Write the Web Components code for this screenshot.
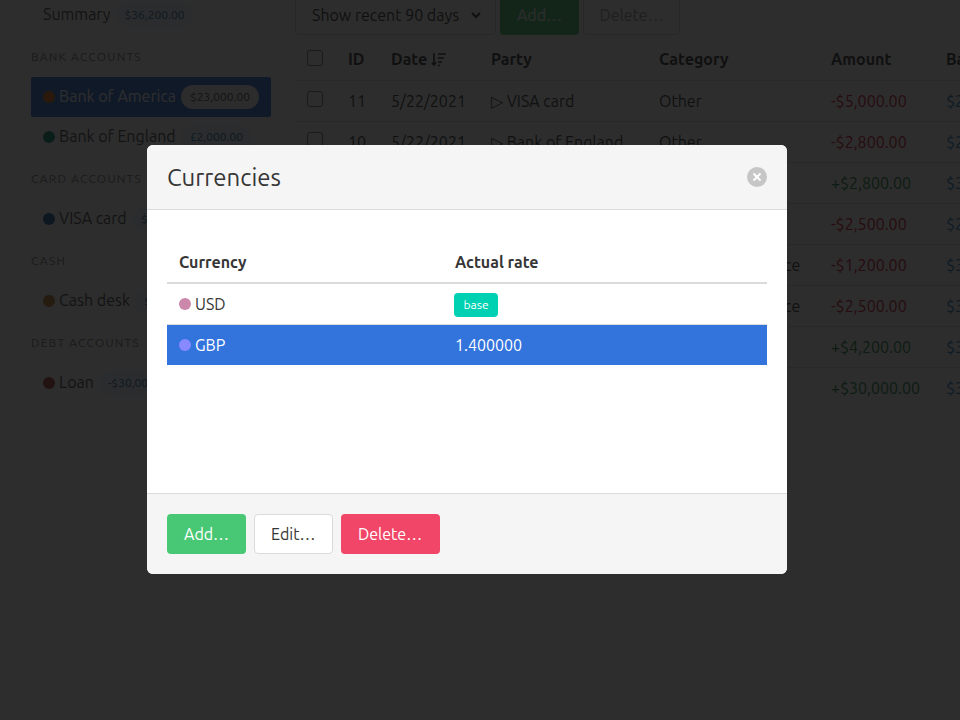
<!DOCTYPE html>
<html>
<head>
<meta charset="utf-8">
<title>Currencies</title>
<style>
    html { background: white; text-rendering: optimizeLegibility; }
    html, body { margin: 0; height: 720px; overflow: hidden; }
    body { position: relative; font-family: Ubuntu, "Noto Sans", "Open Sans", sans-serif; font-size: 16px; color: #4a4a4a; }
</style>
</head>
<body>

<app-page>
    <side-menu slot="side">
        <menu-item label="Summary" amount="$36,200.00"></menu-item>
        <menu-label>Bank accounts</menu-label>
        <menu-item label="Bank of America" amount="$23,000.00" dot="#e8720c" active></menu-item>
        <menu-item label="Bank of England" amount="£2,000.00" dot="#0f8f73"></menu-item>
        <menu-label>Card accounts</menu-label>
        <menu-item label="VISA card" amount="$5,000.00" dot="#1666b0"></menu-item>
        <menu-label>Cash</menu-label>
        <menu-item label="Cash desk" amount="$6,200.00" dot="#c9822e"></menu-item>
        <menu-label>Debt accounts</menu-label>
        <menu-item label="Loan" amount="-$30,000.00" dot="#b84040"></menu-item>
    </side-menu>
    <tx-panel></tx-panel>
</app-page>

<currency-modal>
    <app-button slot="foot" kind="success">Add…</app-button>
    <app-button slot="foot">Edit…</app-button>
    <app-button slot="foot" kind="danger">Delete…</app-button>
</currency-modal>

<script>
class AppPage extends HTMLElement {
    constructor() {
        super();
        const shadow = this.attachShadow({ mode: 'open' });
        shadow.innerHTML = `
            <style>
                :host {
                    display: flex;
                    gap: 24px;
                    width: 1200px;
                    margin-top: -5px;
                    padding-left: 31px;
                }
            </style>
            <slot name="side"></slot>
            <slot></slot>
        `
    }
}

class SideMenu extends HTMLElement {
    constructor() {
        super();
        const shadow = this.attachShadow({ mode: 'open' });
        shadow.innerHTML = `
            <style>
                :host {
                    display: flex;
                    flex-direction: column;
                    flex: none;
                    width: 240px;
                }
            </style>
            <slot></slot>
        `
    }
}

class MenuLabel extends HTMLElement {
    constructor() {
        super();
        const shadow = this.attachShadow({ mode: 'open' });
        shadow.innerHTML = `
            <style>
                :host {
                    display: block;
                    height: 15px;
                    margin: 14px 0 13px;
                    font-size: 12px;
                    line-height: 15px;
                    letter-spacing: 1.2px;
                    text-transform: uppercase;
                    color: #7a7a7a;
                }
            </style>
            <slot></slot>
        `
    }
}

class MenuItem extends HTMLElement {
    constructor() {
        super();
        const shadow = this.attachShadow({ mode: 'open' });
        const dot = this.getAttribute('dot');
        shadow.innerHTML = `
            <style>
                :host {
                    display: flex;
                    align-items: center;
                    height: 40px;
                    padding: 0 12px;
                    border-radius: 2px;
                    white-space: nowrap;
                    overflow: hidden;
                    color: #4a4a4a;
                }
                :host([active]) {
                    background: #3273dc;
                    color: white;
                }
                .dot {
                    flex: none;
                    width: 12px;
                    height: 12px;
                    margin-right: 4px;
                    border-radius: 50%;
                }
                .name { padding-bottom: 2px; }
                .tag {
                    flex: none;
                    margin-left: 5px;
                    padding: 0 9px;
                    height: 24px;
                    border-radius: 12px;
                    font-size: 12px;
                    line-height: 24px;
                    background: #eef6fc;
                    color: #1d72aa;
                }
                :host([active]) .tag {
                    background: #f5f5f5;
                    color: #4a4a4a;
                }
            </style>
            ${dot ? `<span class="dot" style="background:${dot}"></span>` : ''}
            <span class="name">${this.getAttribute('label')}</span>
            <span class="tag">${this.getAttribute('amount')}</span>
        `
    }
}

const TX_ROWS = [
    ['11', '▷ VISA card', 'Other', '-$5,000.00', '$23,000.00'],
    ['10', '▷ Bank of England', 'Other', '-$2,800.00', '$28,000.00'],
    ['9', '◁ Bank of England', 'Other', '+$2,800.00', '$30,800.00'],
    ['8', '▷ Cash desk', 'Other', '-$2,500.00', '$28,000.00'],
    ['7', 'Rent office', 'Office Maintenance', '-$1,200.00', '$30,500.00'],
    ['6', 'Rent storage', 'Office Maintenance', '-$2,500.00', '$31,700.00'],
    ['5', 'Customer', 'Sales', '+$4,200.00', '$34,200.00'],
    ['4', 'Loan', 'Other', '+$30,000.00', '$30,000.00']
];

class TxPanel extends HTMLElement {
    constructor() {
        super();
        const shadow = this.attachShadow({ mode: 'open' });
        const rows = TX_ROWS.map(r => `
            <tr>
                <td><span class="check"></span></td>
                <td>${r[0]}</td>
                <td>5/22/2021</td>
                <td>${r[1]}</td>
                <td>${r[2]}</td>
                <td class="${r[3][0] === '+' ? 'plus' : 'minus'}">${r[3]}</td>
                <td class="bal">${r[4]}</td>
            </tr>`).join('');
        shadow.innerHTML = `
            <style>
                :host {
                    display: block;
                    flex: none;
                }
                .bar {
                    display: flex;
                    gap: 4px;
                    margin-bottom: 4px;
                    height: 40px;
                }
                .bar > div {
                    box-sizing: border-box;
                    display: flex;
                    align-items: center;
                    justify-content: center;
                    height: 40px;
                    border: 1px solid #dbdbdb;
                    border-radius: 4px;
                    color: #363636;
                }
                .select { width: 201px; justify-content: space-between !important; padding: 0 13px 0 16px; }
                .add { width: 79px; background: #48c774; border-color: transparent !important; color: white !important; }
                .del { width: 97px; color: #9a9a9a !important; }
                table {
                    border-collapse: collapse;
                    table-layout: fixed;
                    width: 740px;
                    color: #363636;
                }
                th, td {
                    box-sizing: border-box;
                    height: 41px;
                    padding: 0 0 0 12px;
                    line-height: 24px;
                    text-align: left;
                    white-space: nowrap;
                    border-bottom: 1px solid #dbdbdb;
                    vertical-align: middle;
                }
                th { font-weight: 700; }
                tr:last-child td { border-bottom: 0; }
                .check {
                    display: block;
                    box-sizing: border-box;
                    width: 16px;
                    height: 16px;
                    margin-bottom: 3px;
                    border: 1px solid #767676;
                    border-radius: 3px;
                    background: white;
                }
                .minus { color: #cc0f35; }
                .plus { color: #23853f; }
                .bal { color: #2080c8; }
                svg { vertical-align: -2px; }
            </style>
            <div class="bar">
                <div class="select">Show recent 90 days
                    <svg width="12" height="8" viewBox="0 0 12 8"><path d="M2 2l4 4 4-4" fill="none" stroke="#363636" stroke-width="2"/></svg>
                </div>
                <div class="add">Add…</div>
                <div class="del">Delete…</div>
            </div>
            <table>
                <colgroup>
                    <col style="width:41px"><col style="width:43px"><col style="width:100px">
                    <col style="width:168px"><col style="width:172px"><col style="width:115px"><col style="width:101px">
                </colgroup>
                <tr>
                    <th><span class="check"></span></th>
                    <th>ID</th>
                    <th>Date <svg width="16" height="15" viewBox="0 0 16 15"><path d="M3 1v12M.8 10.500L3 13l2.200-2.500M7 2h8M7 6h6M7 10h4M7 13.500h2" fill="none" stroke="#363636" stroke-width="1.6"/></svg></th>
                    <th>Party</th>
                    <th>Category</th>
                    <th>Amount</th>
                    <th>Balance</th>
                </tr>
                ${rows}
            </table>
        `
    }
}

class AppButton extends HTMLElement {
    constructor() {
        super();
        const shadow = this.attachShadow({ mode: 'open' });
        shadow.innerHTML = `
            <style>
                :host {
                    display: block;
                    box-sizing: border-box;
                    height: 40px;
                    padding: 0 16px;
                    border: 1px solid #dbdbdb;
                    border-radius: 4px;
                    background: white;
                    color: #363636;
                    line-height: 38px;
                }
                :host([kind="success"]) { background: #48c774; border-color: transparent; color: white; }
                :host([kind="danger"]) { background: #f14668; border-color: transparent; color: white; min-width: 99px; text-align: center; }
            </style>
            <slot></slot>
        `
    }
}

class CurrencyModal extends HTMLElement {
    constructor() {
        super();
        const shadow = this.attachShadow({ mode: 'open' });
        shadow.innerHTML = `
            <style>
                :host {
                    position: absolute;
                    inset: 0;
                    display: flex;
                    align-items: flex-start;
                    justify-content: center;
                    padding: 145px 26px 0 0;
                    box-sizing: border-box;
                    background: rgba(10, 10, 10, .86);
                }
                .card {
                    width: 640px;
                    border-radius: 6px;
                    background: white;
                }
                header {
                    display: flex;
                    align-items: center;
                    justify-content: space-between;
                    height: 64px;
                    padding: 0 20px;
                    background: #f5f5f5;
                    border-bottom: 1px solid #dbdbdb;
                    border-radius: 6px 6px 0 0;
                    color: #363636;
                    font-size: 24px;
                }
                .close {
                    width: 20px;
                    height: 20px;
                    border-radius: 50%;
                    background: rgba(10, 10, 10, .2);
                }
                .close svg { display: block; }
                .body {
                    box-sizing: border-box;
                    height: 283px;
                    padding: 32px 20px 0;
                }
                table {
                    width: 600px;
                    table-layout: fixed;
                    border-collapse: collapse;
                    color: #363636;
                }
                th, td {
                    box-sizing: border-box;
                    padding: 0 12px;
                    text-align: left;
                }
                th {
                    height: 41px;
                    border-bottom: 2px solid #dbdbdb;
                    font-weight: 700;
                }
                td { height: 41px; border-bottom: 1px solid #dbdbdb; }
                tr.selected td { height: 41px; border-bottom: 0; background: #3273dc; color: white; }
                .cur { display: flex; align-items: center; gap: 4px; }
                .dot { width: 12px; height: 12px; border-radius: 50%; }
                .tag {
                    display: inline-block;
                    height: 24px;
                    margin-top: 2px;
                    margin-left: -1px;
                    padding: 0 9.5px;
                    border-radius: 4px;
                    background: #00d1b2;
                    color: white;
                    font-size: 12px;
                    line-height: 24px;
                    vertical-align: middle;
                }
                footer {
                    display: flex;
                    gap: 8px;
                    padding: 20px;
                    background: #f5f5f5;
                    border-top: 1px solid #dbdbdb;
                    border-radius: 0 0 6px 6px;
                }
            </style>
            <div class="card">
                <header>
                    <span>Currencies</span>
                    <span class="close">
                        <svg width="20" height="20" viewBox="0 0 20 20"><path d="M6.500 6.500l7 7M13.500 6.500l-7 7" stroke="white" stroke-width="2"/></svg>
                    </span>
                </header>
                <div class="body">
                    <table>
                        <colgroup><col style="width:276px"><col></colgroup>
                        <tr><th>Currency</th><th>Actual rate</th></tr>
                        <tr>
                            <td><div class="cur"><span class="dot" style="background:#cc88aa"></span>USD</div></td>
                            <td><span class="tag">base</span></td>
                        </tr>
                        <tr class="selected">
                            <td><div class="cur"><span class="dot" style="background:#8888ff"></span>GBP</div></td>
                            <td>1.400000</td>
                        </tr>
                    </table>
                </div>
                <footer><slot name="foot"></slot></footer>
            </div>
        `
    }
}

customElements.define('app-page', AppPage)
customElements.define('side-menu', SideMenu)
customElements.define('menu-label', MenuLabel)
customElements.define('menu-item', MenuItem)
customElements.define('tx-panel', TxPanel)
customElements.define('app-button', AppButton)
customElements.define('currency-modal', CurrencyModal)
</script>
</body>
</html>
